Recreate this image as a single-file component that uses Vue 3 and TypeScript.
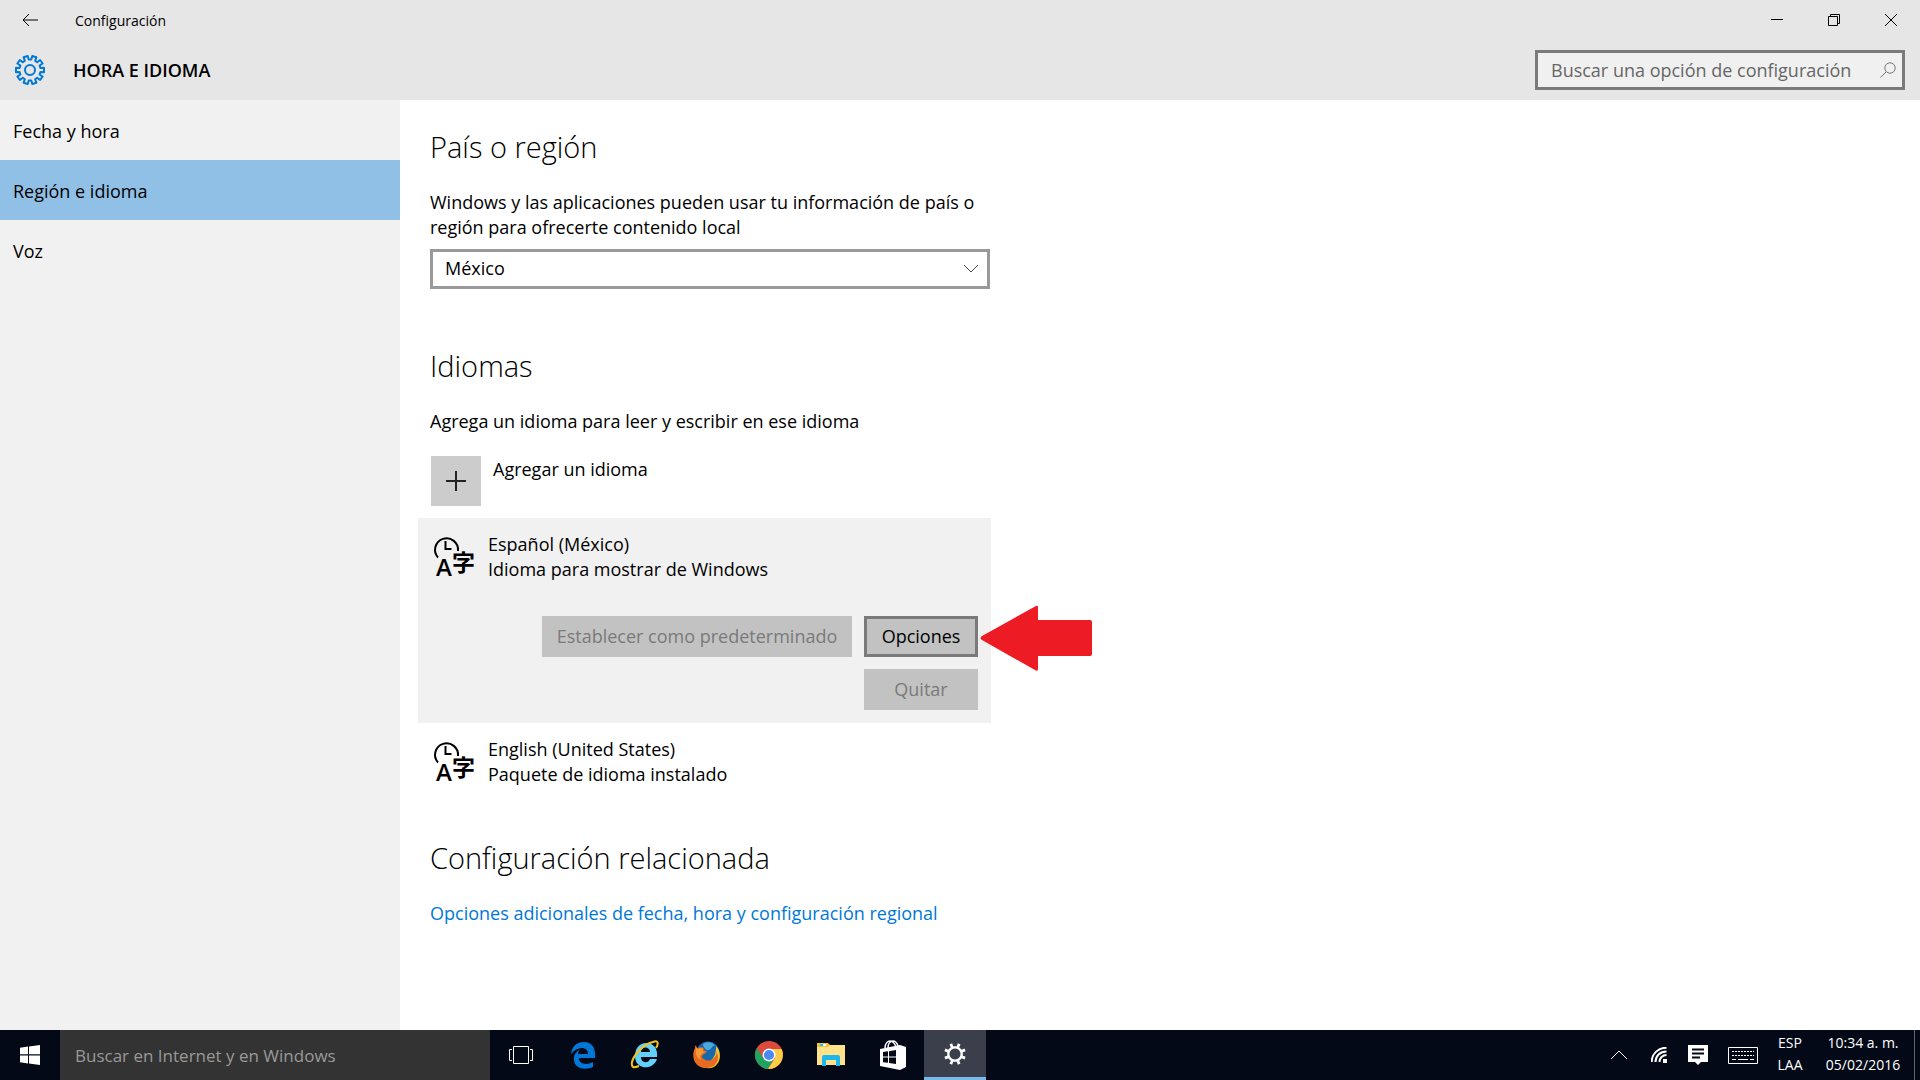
<script setup lang="ts">
import { ref } from 'vue'

interface Language {
  name: string
  note: string
}

const sections: string[] = ['Fecha y hora', 'Región e idioma', 'Voz']
const activeSection = ref('Región e idioma')
const country = ref('México')
const countries: string[] = ['México']
const languages: Language[] = [
  { name: 'Español (México)', note: 'Idioma para mostrar de Windows' },
  { name: 'English (United States)', note: 'Paquete de idioma instalado' },
]
const selectedLanguage = ref('Español (México)')

// Builds a closed cog outline centred on (c, c).
function cog(teeth: number, c: number, outer: number, inner: number, top: number, base: number): string {
  const points: string[] = []
  const step = (Math.PI * 2) / teeth
  for (let i = 0; i < teeth; i++) {
    const mid = (i + 0.5) * step - Math.PI / 2
    const corners: [number, number][] = [
      [inner, -base],
      [outer, -top],
      [outer, top],
      [inner, base],
    ]
    for (const [r, offset] of corners) {
      const a = mid + offset * step
      points.push(`${(c + r * Math.cos(a)).toFixed(2)} ${(c + r * Math.sin(a)).toFixed(2)}`)
    }
  }
  return `M${points.join('L')}Z`
}

const headerCog = cog(10, 15, 14.2, 10.6, 0.24, 0.31)
const taskCog = cog(8, 11, 11, 8, 0.17, 0.2)
</script>

<template>
  <div class="desktop">
    <header class="header">
      <div class="titlebar">
        <button class="back" type="button" aria-label="Atrás">
          <svg width="16" height="14" viewBox="0 0 16 14"><path d="M7 1 1 7l6 6M1 7h15" /></svg>
        </button>
        <span class="window-name">Configuración</span>
        <div class="window-controls">
          <button type="button" aria-label="Minimizar">
            <svg width="12" height="12" viewBox="0 0 12 12"><path d="M0 5.5h12" /></svg>
          </button>
          <button type="button" aria-label="Restaurar">
            <svg width="12" height="12" viewBox="0 0 12 12"><path d="M.5 2.500h9v9h-9zM2.500 2.500v-2h9v9h-2" /></svg>
          </button>
          <button type="button" aria-label="Cerrar">
            <svg width="12" height="12" viewBox="0 0 12 12"><path d="M0 0l12 12M12 0 0 12" /></svg>
          </button>
        </div>
      </div>
      <div class="heading-row">
        <svg class="cog" width="30" height="30" viewBox="0 0 30 30">
          <path :d="headerCog" />
          <circle cx="15" cy="15" r="5" />
        </svg>
        <h1>HORA E IDIOMA</h1>
        <label class="search">
          <input type="text" placeholder="Buscar una opción de configuración" aria-label="Buscar una opción de configuración" />
          <svg width="16" height="16" viewBox="0 0 16 16">
            <circle cx="10" cy="6" r="5.2" />
            <path d="M6.200 9.800.5 15.500" />
          </svg>
        </label>
      </div>
    </header>

    <div class="body">
      <nav class="sidebar">
        <a
          v-for="section in sections"
          :key="section"
          href="#"
          :class="{ active: section === activeSection }"
          @click.prevent="activeSection = section"
        >{{ section }}</a>
      </nav>

      <main class="content">
        <section class="block">
          <h2>País o región</h2>
          <label class="copy" for="country">
            Windows y las aplicaciones pueden usar tu información de país o región para ofrecerte contenido local
          </label>
          <div class="dropdown">
            <select id="country" v-model="country">
              <option v-for="item in countries" :key="item">{{ item }}</option>
            </select>
            <svg width="16" height="10" viewBox="0 0 16 10"><path d="M1 1l7 7 7-7" /></svg>
          </div>
        </section>

        <section class="block">
          <h2>Idiomas</h2>
          <p class="copy">Agrega un idioma para leer y escribir en ese idioma</p>
          <button class="add" type="button">
            <span class="plus">
              <svg width="20" height="20" viewBox="0 0 20 20"><path d="M10 0v20M0 10h20" /></svg>
            </span>
            <span class="add-label">Agregar un idioma</span>
          </button>
          <ul class="languages">
            <li
              v-for="language in languages"
              :key="language.name"
              :class="{ selected: language.name === selectedLanguage }"
              @click="selectedLanguage = language.name"
            >
              <div class="language">
                <svg width="42" height="48" viewBox="0 0 42 48" aria-hidden="true">
                  <path class="dial" d="M5 21.500A11.500 11.500 0 1 1 25 15" />
                  <path class="hands" d="M12.500 5v8h6" />
                  <text class="latin" x="3" y="40">A</text>
                  <text class="kanji" x="19" y="35">字</text>
                </svg>
                <div>
                  <div>{{ language.name }}</div>
                  <div>{{ language.note }}</div>
                </div>
              </div>
              <div v-if="language.name === selectedLanguage" class="actions">
                <button class="wide" type="button" disabled>Establecer como predeterminado</button>
                <button class="focused" type="button">Opciones</button>
                <button type="button" disabled>Quitar</button>
                <svg class="pointer" width="112" height="66" viewBox="0 0 112 66">
                  <path d="M2 31 56 1q2-1 2 1v13h52q2 0 2 2v32q0 2-2 2H58v13q0 3-3 1L2 35q-3-2 0-4Z" />
                </svg>
              </div>
            </li>
          </ul>
        </section>

        <section class="block">
          <h2>Configuración relacionada</h2>
          <a class="copy related" href="#">Opciones adicionales de fecha, hora y configuración regional</a>
        </section>
      </main>
    </div>

    <footer class="taskbar">
      <button class="start" type="button" aria-label="Inicio">
        <svg width="20" height="20" viewBox="0 0 20 20" fill="#fff">
          <path d="M0 2.800 8 1.600V9.300H0zM9 1.400 20 0v9.300H9zM0 10.500h8v7.900L0 17.300zM9 10.500h11V20L9 18.500z" />
        </svg>
      </button>
      <input class="task-search" type="text" placeholder="Buscar en Internet y en Windows" aria-label="Buscar en Internet y en Windows" />
      <div class="apps">
        <button type="button" aria-label="Vista de tareas">
          <svg width="26" height="20" viewBox="0 0 26 20" fill="none" stroke="#fff">
            <path d="M5.500 1.500h15v17h-15zM4 4.500H1.500v11H4M22 4.500h2.500v11H22" />
          </svg>
        </button>
        <button type="button" aria-label="Microsoft Edge">
          <svg width="26" height="28" viewBox="0 0 26 28">
            <path fill="#0078d7" d="M1 13C2 5 7 1 14 1c8 0 12 6 11 16H9c0 7 9 7 14 4v5C14 30 3 27 4 17c0-4 3-7 6-8-1 1-2 2-2 4h10c0-8-11-8-17 0Z" />
          </svg>
        </button>
        <button type="button" aria-label="Internet Explorer">
          <svg width="30" height="30" viewBox="0 0 30 30">
            <path fill="#62d0f8" d="M16 3c8 0 12 6 11 14H11c0 6 7 7 9 2h7c-4 12-22 11-22-3C5 8 10 3 16 3Zm-5 9h9c0-6-9-6-9 0Z" />
            <path fill="none" stroke="#f7c21a" stroke-width="2" d="M26 8c3-5 2-8-3-6C14 4 4 14 2 22c-1 6 2 6 7 4" />
          </svg>
        </button>
        <button type="button" aria-label="Firefox">
          <svg width="28" height="28" viewBox="0 0 28 28">
            <circle cx="15" cy="12" r="11.500" fill="#1769ac" />
            <path fill="#4ba9de" d="M10 3c4-3 10-2 12 2-3-1-3 3-6 4s-6-3-6-6Z" />
            <path fill="#f7c331" d="M23 5c6 6 5 17-2 21-7 3-16 0-17-6 8 6 20 0 19-15Z" />
            <path fill="#e66a1f" d="M3 4c0 2 1 3 2 3 2-1 4-1 6 0-1 2 0 3 3 3-1 3-5 3-5 6 2 4 8 5 12 1 2-2 3-4 2-7 5 8 0 17-9 17C3 28-3 17 2 7c0-1 0-2 1-3Z" />
            <path fill="#f39c35" d="M3 5c0 2 1 3 2 3 2-1 4-1 5 0-1 2 0 3 2 3-4 2-6 4-4 8C3 17 2 11 3 5Z" />
          </svg>
        </button>
        <button type="button" aria-label="Google Chrome">
          <svg width="28" height="28" viewBox="0 0 28 28">
            <circle cx="14" cy="14" r="14" fill="#dd4b3e" />
            <path fill="#1da462" d="M1.900 7A14 14 0 0 0 13 28l6.200-11L14 20 8 17Z" />
            <path fill="#ffcd46" d="M26.500 8A14 14 0 0 1 13 28l7-11-1-6-5-3Z" />
            <circle cx="14" cy="14" r="6.500" fill="#fff" />
            <circle cx="14" cy="14" r="5.100" fill="#4a8af4" />
          </svg>
        </button>
        <button type="button" aria-label="Explorador de archivos">
          <svg width="28" height="24" viewBox="0 0 28 24">
            <path fill="#f2c335" d="M0 0h11l2 2h14v4H0z" />
            <path fill="#ffe28a" d="M0 4h11l2-2h15v20H0z" />
            <path fill="#fff" d="M3 1h6v2H3z" />
            <path fill="#35b4e8" d="M3 1h3v2H3z" />
            <path fill="#1fb6ee" d="M5 14q0-2 2-2h14q2 0 2 2v9h-4v-6H9v6H5z" />
          </svg>
        </button>
        <button type="button" aria-label="Tienda">
          <svg width="26" height="30" viewBox="0 0 26 30">
            <path fill="none" stroke="#fff" stroke-width="1.500" d="M5 8C5 3 8 1 10 1s5 2 6 6M8 8c0-4 2-7 5-7 2 0 4 2 5 5" />
            <path fill="#fff" fill-rule="evenodd" d="M0 9 20 5l6 2v20l-6 3L0 26ZM3 12v4.500h5V11.300ZM9 11.200v5.300h7v-6.500ZM3 17.500v4.700l5 .6v-5.300ZM9 17.500v5.500l7 1v-6.500Z" />
          </svg>
        </button>
        <button class="running" type="button" aria-label="Configuración">
          <svg width="22" height="22" viewBox="0 0 22 22">
            <path fill="#fff" fill-rule="evenodd" :d="taskCog + 'M11 5.500a5.500 5.500 0 1 0 .01 0Z'" />
          </svg>
        </button>
      </div>
      <div class="tray">
        <svg width="18" height="10" viewBox="0 0 18 10"><path d="M1 9l8-8 8 8" /></svg>
        <svg class="wifi" width="16" height="16" viewBox="0 0 16 16">
          <path d="M.7 15C.7 7 7 .7 15.500.7M4.500 15C4.500 9 9 4.500 15.500 4.500M8.500 15c0-4 3-7 7-7" />
          <path class="solid" d="M12 12h4v4h-4z" />
        </svg>
        <svg width="20" height="20" viewBox="0 0 20 20">
          <path class="solid" d="M0 0h20v17h-7l-3 3-3-3H0z" />
          <path class="dark" d="M4 4.500h12M4 8.500h12M4 12.500h8" />
        </svg>
        <svg class="keyboard" width="30" height="17" viewBox="0 0 30 17">
          <path d="M.5.500h29v16H.5z" />
          <path stroke-dasharray="2 1" d="M4 4.500h22M4 8.500h22" />
          <path d="M4 12.500h4M10 12.500h10M22 12.500h4" />
        </svg>
        <div class="stack layout"><span>ESP</span><span>LAA</span></div>
        <div class="stack clock"><span>10:34 a. m.</span><span>05/02/2016</span></div>
        <div class="peek"></div>
      </div>
    </footer>
  </div>
</template>

<style>
body {
  margin: 0;
}
</style>

<style scoped>
.desktop {
  display: flex;
  flex-direction: column;
  min-height: 100vh;
  background: #fff;
  color: #000;
  font-family: "Open Sans", "Noto Sans", sans-serif;
  font-size: 18px;
  line-height: 25px;
}
.desktop * {
  box-sizing: border-box;
}
button,
input,
select {
  margin: 0;
  padding: 0;
  border: 0;
  border-radius: 0;
  outline: 0;
  background: none;
  color: inherit;
  font: inherit;
}
svg {
  display: block;
  flex: none;
}
h1,
h2,
p,
ul {
  margin: 0;
  padding: 0;
  list-style: none;
}
a {
  text-decoration: none;
}

.header {
  background: #e6e6e6;
}
.titlebar {
  display: flex;
  align-items: center;
  height: 40px;
}
.back {
  display: flex;
  justify-content: center;
  width: 59px;
}
.titlebar svg {
  fill: none;
  stroke: #000;
}
.window-name {
  margin-left: 16px;
  font-size: 14px;
}
.window-controls {
  display: flex;
  margin-left: auto;
  padding-right: 1px;
}
.window-controls button {
  display: flex;
  align-items: center;
  justify-content: center;
  width: 57px;
  height: 40px;
}
.heading-row {
  display: flex;
  align-items: center;
  height: 60px;
  padding: 0 15px;
}
.cog {
  fill: none;
  stroke: #0078d7;
  stroke-width: 2;
  stroke-linejoin: round;
}
h1 {
  margin-left: 28px;
  font-size: 18px;
  font-weight: 600;
}
.search {
  display: flex;
  align-items: center;
  width: 370px;
  height: 40px;
  margin-left: auto;
  padding: 0 6px 0 13px;
  border: 3px solid #7a7a7a;
  background: #f0f0f0;
}
.search input {
  flex: 1;
  min-width: 0;
}
.search input::placeholder {
  color: #666;
  opacity: 1;
}
.search svg {
  fill: none;
  stroke: #777;
}

.body {
  display: flex;
  flex: 1;
}
.sidebar {
  flex: none;
  width: 400px;
  background: #f1f1f1;
}
.sidebar a {
  display: flex;
  align-items: center;
  height: 60px;
  padding: 2px 13px 0;
  color: #000;
}
.sidebar .active {
  background: #91c0e7;
}

.content {
  flex: 1;
  max-width: 620px;
  padding: 27px 30px 60px;
}
.block {
  display: flex;
  flex-direction: column;
}
.block + .block {
  margin-top: 37px;
}
h2 {
  margin-bottom: 21px;
  font-size: 29px;
  font-weight: 300;
  line-height: 40px;
}
.copy {
  margin-top: 2px;
}
.dropdown {
  position: relative;
  margin: 9px 0 20px;
}
.dropdown select {
  width: 100%;
  height: 40px;
  padding: 0 12px 2px;
  border: 3px solid #999;
  background: #fff;
  appearance: none;
}
.dropdown svg {
  position: absolute;
  top: 15px;
  right: 11px;
  fill: none;
  stroke: #444;
  pointer-events: none;
}
.add {
  display: flex;
  align-items: flex-start;
  gap: 12px;
  margin: 22px 0 12px 1px;
  text-align: left;
}
.plus {
  display: flex;
  align-items: center;
  justify-content: center;
  width: 50px;
  height: 50px;
  background: #ccc;
}
.add-label {
  padding-top: 1px;
}
.plus svg {
  fill: none;
  stroke: #222;
  stroke-width: 2;
}
.languages {
  margin: 0 -1px 0 -12px;
}
.languages li {
  padding: 13px 13px;
}
.languages .selected {
  background: #f1f1f1;
}
.language {
  display: flex;
  gap: 13px;
  padding: 1px 2px;
}
.language > svg {
  margin: 4px 0 -2px;
  overflow: visible;
}
.dial {
  fill: none;
  stroke: #000;
  stroke-width: 2;
}
.hands {
  fill: none;
  stroke: #000;
  stroke-width: 2;
}
.latin {
  font-size: 24px;
  font-weight: 600;
}
.kanji {
  font-family: "Noto Sans CJK JP", sans-serif;
  font-size: 23px;
  font-weight: 700;
}
.actions {
  position: relative;
  display: flex;
  flex-wrap: wrap;
  justify-content: flex-end;
  gap: 12px;
  margin-top: 33px;
}
.actions button {
  width: 114px;
  height: 41px;
  background: #c2c2c2;
}
.actions button:disabled {
  color: #7a7a7a;
}
.actions .wide {
  width: 310px;
}
.actions .focused {
  border: 3px solid #7a7a7a;
}
.pointer {
  position: absolute;
  top: -11px;
  left: 100%;
  margin-left: 2px;
  fill: #ed1c24;
}
.related {
  align-self: flex-start;
  color: #0078d7;
}

.taskbar {
  display: flex;
  height: 50px;
  background: #030917;
  color: #fff;
}
.start {
  display: flex;
  align-items: center;
  justify-content: center;
  width: 60px;
}
.task-search {
  width: 430px;
  padding: 0 15px;
  background: #333;
  font-size: 17px;
}
.task-search::placeholder {
  color: #999;
  opacity: 1;
}
.apps {
  display: flex;
}
.apps button {
  display: flex;
  align-items: center;
  justify-content: center;
  width: 62px;
}
.apps .running {
  border-bottom: 3px solid #76b9ed;
  background: #3a3f4b;
}
.tray {
  display: flex;
  align-items: center;
  margin-left: auto;
  font-size: 14px;
  line-height: 22px;
}
.tray svg {
  margin-right: 20px;
  fill: none;
  stroke: #fff;
}
.tray .wifi {
  margin-left: 3px;
  margin-right: 21px;
  stroke-width: 2;
}
.tray .solid {
  fill: #fff;
  stroke: none;
}
.tray .dark {
  stroke: #030917;
  stroke-width: 2;
}
.stack {
  display: flex;
  flex-direction: column;
  align-items: center;
  padding-bottom: 2px;
}
.layout {
  width: 24px;
}
.clock {
  width: 100px;
  margin: 0 1px 0 11px;
}
.peek {
  width: 6px;
  height: 50px;
  border-left: 1px solid #666;
}
</style>
